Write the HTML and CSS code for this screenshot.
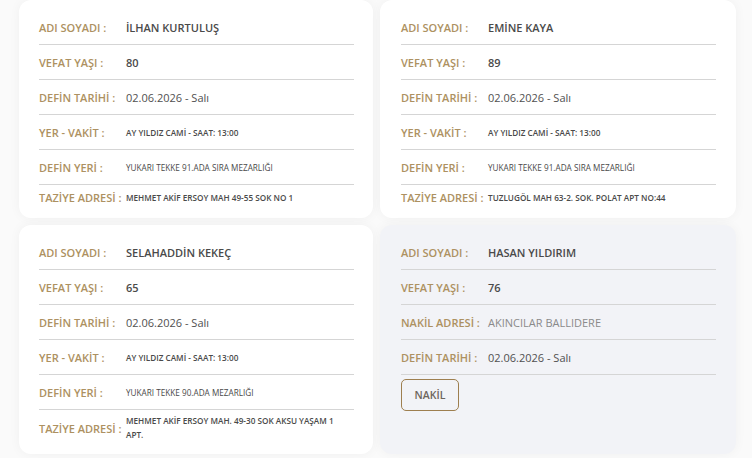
FILE: index.html
```html
<!DOCTYPE html>
<html lang="tr">
<head>
<meta charset="utf-8">
<title>Vefat İlanları</title>
<link rel="stylesheet" href="styles.css">
</head>
<body>
<main class="grid">
  <section class="card">
    <div class="row"><span class="label">ADI SOYADI :</span><span class="value strong">İLHAN KURTULUŞ</span></div>
    <div class="row"><span class="label">VEFAT YAŞI :</span><span class="value strong">80</span></div>
    <div class="row"><span class="label">DEFİN TARİHİ :</span><span class="value">02.06.2026 - Salı</span></div>
    <div class="row"><span class="label">YER - VAKİT :</span><span class="value small bold">AY YILDIZ CAMİ - SAAT: 13:00</span></div>
    <div class="row"><span class="label">DEFİN YERİ :</span><span class="value small">YUKARI TEKKE 91.ADA SIRA MEZARLIĞI</span></div>
    <div class="row last"><span class="label">TAZİYE ADRESİ :</span><span class="value small bold">MEHMET AKİF ERSOY MAH 49-55 SOK NO 1</span></div>
  </section>
  <section class="card">
    <div class="row"><span class="label">ADI SOYADI :</span><span class="value strong">EMİNE KAYA</span></div>
    <div class="row"><span class="label">VEFAT YAŞI :</span><span class="value strong">89</span></div>
    <div class="row"><span class="label">DEFİN TARİHİ :</span><span class="value">02.06.2026 - Salı</span></div>
    <div class="row"><span class="label">YER - VAKİT :</span><span class="value small bold">AY YILDIZ CAMİ - SAAT: 13:00</span></div>
    <div class="row"><span class="label">DEFİN YERİ :</span><span class="value small">YUKARI TEKKE 91.ADA SIRA MEZARLIĞI</span></div>
    <div class="row last"><span class="label">TAZİYE ADRESİ :</span><span class="value small bold">TUZLUGÖL MAH 63-2. SOK. POLAT APT NO:44</span></div>
  </section>
  <section class="card">
    <div class="row"><span class="label">ADI SOYADI :</span><span class="value strong">SELAHADDİN KEKEÇ</span></div>
    <div class="row"><span class="label">VEFAT YAŞI :</span><span class="value strong">65</span></div>
    <div class="row"><span class="label">DEFİN TARİHİ :</span><span class="value">02.06.2026 - Salı</span></div>
    <div class="row"><span class="label">YER - VAKİT :</span><span class="value small bold">AY YILDIZ CAMİ - SAAT: 13:00</span></div>
    <div class="row"><span class="label">DEFİN YERİ :</span><span class="value small">YUKARI TEKKE 90.ADA MEZARLIĞI</span></div>
    <div class="row last"><span class="label">TAZİYE ADRESİ :</span><span class="value small bold wrap">MEHMET AKİF ERSOY MAH. 49-30 SOK AKSU YAŞAM 1 APT.</span></div>
  </section>
  <section class="card muted">
    <div class="row"><span class="label">ADI SOYADI :</span><span class="value strong">HASAN YILDIRIM</span></div>
    <div class="row"><span class="label">VEFAT YAŞI :</span><span class="value strong">76</span></div>
    <div class="row"><span class="label">NAKİL ADRESİ :</span><span class="value light">AKINCILAR BALLIDERE</span></div>
    <div class="row"><span class="label">DEFİN TARİHİ :</span><span class="value">02.06.2026 - Salı</span></div>
    <button class="btn" type="button">NAKİL</button>
  </section>
</main>
</body>
</html>
```

FILE: styles.css
```css
* { box-sizing: border-box; }
html, body { margin: 0; padding: 0; }
body {
  background: #fafafa;
  font-family: "Open Sans", "Noto Sans", sans-serif;
  color: #4a4a4a;
  width: 752px;
  height: 458px;
  overflow: hidden;
}
.grid {
  display: grid;
  grid-template-columns: 354px 356px;
  column-gap: 7px;
  row-gap: 7px;
  padding-left: 19px;
}
.card {
  background: #ffffff;
  border-radius: 12px;
  padding: 10px 19px 12px 20px;
  box-shadow: 0 0 12px rgba(0, 0, 0, 0.045);
}
.card:nth-child(even) { padding-left: 21px; padding-right: 20px; }
.card.muted { background: #f2f3f7; }
.row {
  display: flex;
  align-items: center;
  padding: 10px 0 9px;
  line-height: 15px;
  border-bottom: 1px solid #d5d5d5;
}
.row.last { border-bottom: none; padding: 5px 0 1px; }
.card:nth-child(3) .row.last { padding: 4px 0 0; }
.label {
  flex: 0 0 87px;
  font-size: 11px;
  font-weight: 600;
  color: #ad9161;
  white-space: nowrap;
}
.value {
  font-size: 11px;
  font-weight: 400;
  color: #505050;
}
.value.strong { font-weight: 600; color: #4a4a4a; }
.value.light { color: #8a8a8a; }
.value.small { font-size: 8.2px; font-weight: 500; color: #4a4a4a; line-height: 14px; }
.value.small.bold { font-weight: 600; }
.value.wrap { max-width: 218px; }
.btn {
  display: block;
  margin-top: 4px;
  width: 58px;
  height: 32px;
  border: 1px solid #9e7f4f;
  border-radius: 5px;
  background: transparent;
  font-family: "Open Sans", "Noto Sans", sans-serif;
  font-size: 10.5px;
  font-weight: 600;
  color: #6e655c;
  padding: 0;
}
```
